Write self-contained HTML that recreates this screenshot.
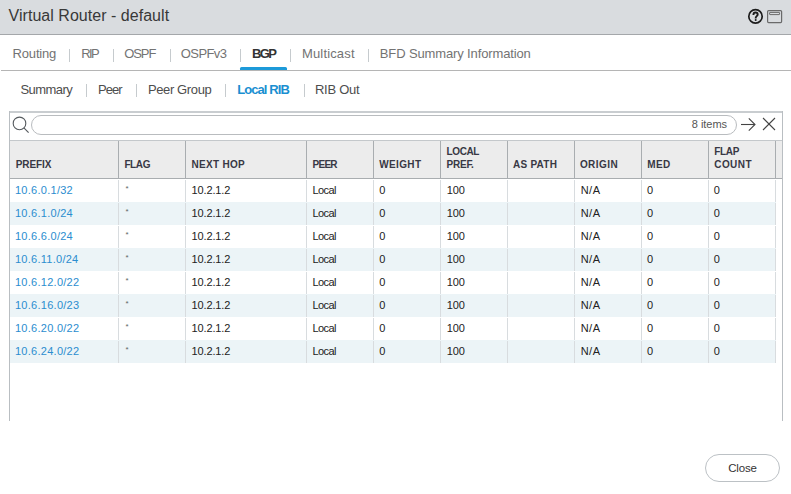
<!DOCTYPE html><html><head><meta charset="utf-8"><style>
html,body{margin:0;padding:0;width:791px;height:494px;overflow:hidden;background:#fff;}
body{position:relative;font-family:"Liberation Sans", sans-serif;}
.t{position:absolute;line-height:1;white-space:nowrap;}
.b{position:absolute;}
</style></head><body>
<div class="b" style="left:0;top:0;width:791px;height:34px;background:#d9dcdf;"></div>
<div class="b" style="left:0;top:34px;width:791px;height:1px;background:#a4a7aa;"></div>
<div class="t" style="left:8.60px;top:7.96px;font-size:16px;color:#383838;letter-spacing:0.03px;">Virtual Router - default</div>
<svg class="b" style="left:746px;top:7px" width="40" height="20" viewBox="0 0 40 20">
<circle cx="9.5" cy="9.4" r="6.7" fill="none" stroke="#1c1c1c" stroke-width="1.7"/>
<path d="M7.4,7.9 C7.4,6.3 8.3,5.5 9.6,5.5 C10.9,5.5 11.7,6.4 11.7,7.5 C11.7,9 9.7,9.2 9.7,10.9 L9.7,11.6" fill="none" stroke="#1c1c1c" stroke-width="1.9"/><circle cx="9.7" cy="13.1" r="1" fill="#1c1c1c"/>
<rect x="21.6" y="3.6" width="14" height="12" rx="1" fill="none" stroke="#6a6a6a" stroke-width="1.2"/>
<rect x="23.6" y="5.4" width="10" height="2.2" rx="0.4" fill="none" stroke="#6a6a6a" stroke-width="1"/>
</svg>
<div class="t" style="left:12.60px;top:46.70px;font-size:13px;color:#737373;letter-spacing:-0.18px;">Routing</div>
<div class="t" style="left:81.20px;top:46.70px;font-size:13px;color:#737373;letter-spacing:-1.63px;">RIP</div>
<div class="t" style="left:124.20px;top:46.70px;font-size:13px;color:#737373;letter-spacing:-1.07px;">OSPF</div>
<div class="t" style="left:180.80px;top:46.70px;font-size:13px;color:#737373;letter-spacing:-0.60px;">OSPFv3</div>
<div class="t" style="left:252.00px;top:46.70px;font-size:13px;color:#333;font-weight:bold;letter-spacing:-1.57px;">BGP</div>
<div class="t" style="left:302.00px;top:46.70px;font-size:13px;color:#737373;letter-spacing:0.15px;">Multicast</div>
<div class="t" style="left:379.80px;top:46.70px;font-size:13px;color:#737373;letter-spacing:-0.13px;">BFD Summary Information</div>
<div class="b" style="left:69px;top:49px;width:1px;height:13px;background:#c6cbce;"></div>
<div class="b" style="left:113px;top:49px;width:1px;height:13px;background:#c6cbce;"></div>
<div class="b" style="left:170px;top:49px;width:1px;height:13px;background:#c6cbce;"></div>
<div class="b" style="left:240px;top:49px;width:1px;height:13px;background:#c6cbce;"></div>
<div class="b" style="left:290px;top:49px;width:1px;height:13px;background:#c6cbce;"></div>
<div class="b" style="left:368px;top:49px;width:1px;height:13px;background:#c6cbce;"></div>
<div class="b" style="left:1px;top:70px;width:790px;height:1px;background:#b5b5b5;"></div>
<div class="b" style="left:240px;top:67px;width:47px;height:3px;background:#1d9ad9;border-radius:1.5px 1.5px 0 0;"></div>
<div class="t" style="left:20.50px;top:82.70px;font-size:13px;color:#4d4d4d;letter-spacing:-0.57px;">Summary</div>
<div class="t" style="left:98.00px;top:82.70px;font-size:13px;color:#4d4d4d;letter-spacing:-0.95px;">Peer</div>
<div class="t" style="left:147.90px;top:82.70px;font-size:13px;color:#4d4d4d;letter-spacing:-0.37px;">Peer Group</div>
<div class="t" style="left:237.20px;top:82.70px;font-size:13px;color:#1a8fd1;font-weight:bold;letter-spacing:-0.92px;">Local RIB</div>
<div class="t" style="left:315.00px;top:82.70px;font-size:13px;color:#4d4d4d;letter-spacing:-0.27px;">RIB Out</div>
<div class="b" style="left:86px;top:84px;width:1px;height:13px;background:#c6cbce;"></div>
<div class="b" style="left:136px;top:84px;width:1px;height:13px;background:#c6cbce;"></div>
<div class="b" style="left:225px;top:84px;width:1px;height:13px;background:#c6cbce;"></div>
<div class="b" style="left:304px;top:84px;width:1px;height:13px;background:#c6cbce;"></div>
<div class="b" style="left:9px;top:111px;width:774px;height:2px;background:#c9cdd0;"></div>
<div class="b" style="left:9px;top:111px;width:1px;height:310px;background:#b9bec2;"></div>
<div class="b" style="left:782px;top:111px;width:1px;height:310px;background:#b9bec2;"></div>
<svg class="b" style="left:10px;top:114px" width="28" height="24" viewBox="0 0 28 24">
<circle cx="9.5" cy="9.4" r="6.3" fill="none" stroke="#555a5e" stroke-width="1.1"/>
<line x1="13.9" y1="13.8" x2="18.6" y2="18.6" stroke="#555a5e" stroke-width="1.1"/>
</svg>
<div class="b" style="left:31px;top:115px;width:704px;height:18px;border:1px solid #b9bcbf;border-radius:10px;box-sizing:content-box;"></div>
<div class="t" style="left:691.80px;top:118.59px;font-size:11px;color:#555;letter-spacing:-0.04px;">8 items</div>
<svg class="b" style="left:738px;top:114px" width="42" height="22" viewBox="0 0 42 22">
<line x1="3" y1="10.5" x2="17" y2="10.5" stroke="#444" stroke-width="1.1"/>
<polyline points="10.8,4.3 17,10.5 10.8,16.7" fill="none" stroke="#444" stroke-width="1.1"/>
<line x1="25" y1="4" x2="37" y2="16" stroke="#444" stroke-width="1.1"/>
<line x1="37" y1="4" x2="25" y2="16" stroke="#444" stroke-width="1.1"/>
</svg>
<div class="b" style="left:10px;top:140px;width:772px;height:1px;background:#c4c8cb;"></div>
<div class="b" style="left:10px;top:141px;width:772px;height:37px;background:#ececec;"></div>
<div class="b" style="left:10px;top:178px;width:772px;height:1px;background:#a9adb0;"></div>
<div class="b" style="left:118px;top:141px;width:1px;height:37px;background:#a9adb0;"></div>
<div class="b" style="left:185px;top:141px;width:1px;height:37px;background:#a9adb0;"></div>
<div class="b" style="left:306px;top:141px;width:1px;height:37px;background:#a9adb0;"></div>
<div class="b" style="left:373px;top:141px;width:1px;height:37px;background:#a9adb0;"></div>
<div class="b" style="left:440px;top:141px;width:1px;height:37px;background:#a9adb0;"></div>
<div class="b" style="left:507px;top:141px;width:1px;height:37px;background:#a9adb0;"></div>
<div class="b" style="left:574px;top:141px;width:1px;height:37px;background:#a9adb0;"></div>
<div class="b" style="left:641px;top:141px;width:1px;height:37px;background:#a9adb0;"></div>
<div class="b" style="left:708px;top:141px;width:1px;height:37px;background:#a9adb0;"></div>
<div class="b" style="left:775px;top:141px;width:1px;height:37px;background:#a9adb0;"></div>
<div class="t" style="left:15.70px;top:159.53px;font-size:10px;color:#383844;font-weight:bold;letter-spacing:-0.10px;">PREFIX</div>
<div class="t" style="left:124.40px;top:159.53px;font-size:10px;color:#383844;font-weight:bold;letter-spacing:-0.40px;">FLAG</div>
<div class="t" style="left:191.60px;top:159.53px;font-size:10px;color:#383844;font-weight:bold;letter-spacing:0.29px;">NEXT HOP</div>
<div class="t" style="left:312.50px;top:159.53px;font-size:10px;color:#383844;font-weight:bold;letter-spacing:-0.72px;">PEER</div>
<div class="t" style="left:379.30px;top:159.53px;font-size:10px;color:#383844;font-weight:bold;letter-spacing:0.34px;">WEIGHT</div>
<div class="t" style="left:446.60px;top:146.53px;font-size:10px;color:#383844;font-weight:bold;letter-spacing:-0.41px;">LOCAL</div>
<div class="t" style="left:446.60px;top:159.53px;font-size:10px;color:#383844;font-weight:bold;letter-spacing:-0.26px;">PREF.</div>
<div class="t" style="left:513.10px;top:159.53px;font-size:10px;color:#383844;font-weight:bold;letter-spacing:0.23px;">AS PATH</div>
<div class="t" style="left:579.90px;top:159.53px;font-size:10px;color:#383844;font-weight:bold;letter-spacing:0.45px;">ORIGIN</div>
<div class="t" style="left:647.30px;top:159.53px;font-size:10px;color:#383844;font-weight:bold;letter-spacing:0.40px;">MED</div>
<div class="t" style="left:714.30px;top:146.53px;font-size:10px;color:#383844;font-weight:bold;letter-spacing:-0.37px;">FLAP</div>
<div class="t" style="left:714.30px;top:159.53px;font-size:10px;color:#383844;font-weight:bold;letter-spacing:0.41px;">COUNT</div>
<div class="b" style="left:10px;top:179px;width:766px;height:23px;background:#fff;"></div>
<div class="b" style="left:118px;top:180px;width:1px;height:22px;background:#d8dcdf;"></div>
<div class="b" style="left:185px;top:180px;width:1px;height:22px;background:#d8dcdf;"></div>
<div class="b" style="left:306px;top:180px;width:1px;height:22px;background:#d8dcdf;"></div>
<div class="b" style="left:373px;top:180px;width:1px;height:22px;background:#d8dcdf;"></div>
<div class="b" style="left:440px;top:180px;width:1px;height:22px;background:#d8dcdf;"></div>
<div class="b" style="left:507px;top:180px;width:1px;height:22px;background:#d8dcdf;"></div>
<div class="b" style="left:574px;top:180px;width:1px;height:22px;background:#d8dcdf;"></div>
<div class="b" style="left:641px;top:180px;width:1px;height:22px;background:#d8dcdf;"></div>
<div class="b" style="left:708px;top:180px;width:1px;height:22px;background:#d8dcdf;"></div>
<div class="b" style="left:775px;top:180px;width:1px;height:22px;background:#d8dcdf;"></div>
<div class="t" style="left:14.90px;top:184.89px;font-size:11px;color:#2b8dcf;letter-spacing:0.28px;">10.6.0.1/32</div>
<div class="t" style="left:125.50px;top:184.93px;font-size:8px;color:#666;">*</div>
<div class="t" style="left:191.60px;top:184.89px;font-size:11px;color:#222;letter-spacing:-0.15px;">10.2.1.2</div>
<div class="t" style="left:312.50px;top:184.89px;font-size:11px;color:#222;letter-spacing:-0.60px;">Local</div>
<div class="t" style="left:379.20px;top:184.89px;font-size:11px;color:#222;">0</div>
<div class="t" style="left:446.80px;top:184.89px;font-size:11px;color:#222;letter-spacing:-0.08px;">100</div>
<div class="t" style="left:580.70px;top:184.89px;font-size:11px;color:#222;letter-spacing:0.47px;">N/A</div>
<div class="t" style="left:646.90px;top:184.89px;font-size:11px;color:#222;">0</div>
<div class="t" style="left:713.80px;top:184.89px;font-size:11px;color:#222;">0</div>
<div class="b" style="left:10px;top:202px;width:766px;height:23px;background:#ecf4f7;"></div>
<div class="b" style="left:118px;top:203px;width:1px;height:22px;background:#d8dcdf;"></div>
<div class="b" style="left:185px;top:203px;width:1px;height:22px;background:#d8dcdf;"></div>
<div class="b" style="left:306px;top:203px;width:1px;height:22px;background:#d8dcdf;"></div>
<div class="b" style="left:373px;top:203px;width:1px;height:22px;background:#d8dcdf;"></div>
<div class="b" style="left:440px;top:203px;width:1px;height:22px;background:#d8dcdf;"></div>
<div class="b" style="left:507px;top:203px;width:1px;height:22px;background:#d8dcdf;"></div>
<div class="b" style="left:574px;top:203px;width:1px;height:22px;background:#d8dcdf;"></div>
<div class="b" style="left:641px;top:203px;width:1px;height:22px;background:#d8dcdf;"></div>
<div class="b" style="left:708px;top:203px;width:1px;height:22px;background:#d8dcdf;"></div>
<div class="b" style="left:775px;top:203px;width:1px;height:22px;background:#d8dcdf;"></div>
<div class="t" style="left:14.90px;top:207.89px;font-size:11px;color:#2b8dcf;letter-spacing:0.28px;">10.6.1.0/24</div>
<div class="t" style="left:125.50px;top:207.93px;font-size:8px;color:#666;">*</div>
<div class="t" style="left:191.60px;top:207.89px;font-size:11px;color:#222;letter-spacing:-0.15px;">10.2.1.2</div>
<div class="t" style="left:312.50px;top:207.89px;font-size:11px;color:#222;letter-spacing:-0.60px;">Local</div>
<div class="t" style="left:379.20px;top:207.89px;font-size:11px;color:#222;">0</div>
<div class="t" style="left:446.80px;top:207.89px;font-size:11px;color:#222;letter-spacing:-0.08px;">100</div>
<div class="t" style="left:580.70px;top:207.89px;font-size:11px;color:#222;letter-spacing:0.47px;">N/A</div>
<div class="t" style="left:646.90px;top:207.89px;font-size:11px;color:#222;">0</div>
<div class="t" style="left:713.80px;top:207.89px;font-size:11px;color:#222;">0</div>
<div class="b" style="left:10px;top:225px;width:766px;height:23px;background:#fff;"></div>
<div class="b" style="left:118px;top:226px;width:1px;height:22px;background:#d8dcdf;"></div>
<div class="b" style="left:185px;top:226px;width:1px;height:22px;background:#d8dcdf;"></div>
<div class="b" style="left:306px;top:226px;width:1px;height:22px;background:#d8dcdf;"></div>
<div class="b" style="left:373px;top:226px;width:1px;height:22px;background:#d8dcdf;"></div>
<div class="b" style="left:440px;top:226px;width:1px;height:22px;background:#d8dcdf;"></div>
<div class="b" style="left:507px;top:226px;width:1px;height:22px;background:#d8dcdf;"></div>
<div class="b" style="left:574px;top:226px;width:1px;height:22px;background:#d8dcdf;"></div>
<div class="b" style="left:641px;top:226px;width:1px;height:22px;background:#d8dcdf;"></div>
<div class="b" style="left:708px;top:226px;width:1px;height:22px;background:#d8dcdf;"></div>
<div class="b" style="left:775px;top:226px;width:1px;height:22px;background:#d8dcdf;"></div>
<div class="t" style="left:14.90px;top:230.89px;font-size:11px;color:#2b8dcf;letter-spacing:0.28px;">10.6.6.0/24</div>
<div class="t" style="left:125.50px;top:230.93px;font-size:8px;color:#666;">*</div>
<div class="t" style="left:191.60px;top:230.89px;font-size:11px;color:#222;letter-spacing:-0.15px;">10.2.1.2</div>
<div class="t" style="left:312.50px;top:230.89px;font-size:11px;color:#222;letter-spacing:-0.60px;">Local</div>
<div class="t" style="left:379.20px;top:230.89px;font-size:11px;color:#222;">0</div>
<div class="t" style="left:446.80px;top:230.89px;font-size:11px;color:#222;letter-spacing:-0.08px;">100</div>
<div class="t" style="left:580.70px;top:230.89px;font-size:11px;color:#222;letter-spacing:0.47px;">N/A</div>
<div class="t" style="left:646.90px;top:230.89px;font-size:11px;color:#222;">0</div>
<div class="t" style="left:713.80px;top:230.89px;font-size:11px;color:#222;">0</div>
<div class="b" style="left:10px;top:248px;width:766px;height:23px;background:#ecf4f7;"></div>
<div class="b" style="left:118px;top:249px;width:1px;height:22px;background:#d8dcdf;"></div>
<div class="b" style="left:185px;top:249px;width:1px;height:22px;background:#d8dcdf;"></div>
<div class="b" style="left:306px;top:249px;width:1px;height:22px;background:#d8dcdf;"></div>
<div class="b" style="left:373px;top:249px;width:1px;height:22px;background:#d8dcdf;"></div>
<div class="b" style="left:440px;top:249px;width:1px;height:22px;background:#d8dcdf;"></div>
<div class="b" style="left:507px;top:249px;width:1px;height:22px;background:#d8dcdf;"></div>
<div class="b" style="left:574px;top:249px;width:1px;height:22px;background:#d8dcdf;"></div>
<div class="b" style="left:641px;top:249px;width:1px;height:22px;background:#d8dcdf;"></div>
<div class="b" style="left:708px;top:249px;width:1px;height:22px;background:#d8dcdf;"></div>
<div class="b" style="left:775px;top:249px;width:1px;height:22px;background:#d8dcdf;"></div>
<div class="t" style="left:14.90px;top:253.89px;font-size:11px;color:#2b8dcf;letter-spacing:0.27px;">10.6.11.0/24</div>
<div class="t" style="left:125.50px;top:253.93px;font-size:8px;color:#666;">*</div>
<div class="t" style="left:191.60px;top:253.89px;font-size:11px;color:#222;letter-spacing:-0.15px;">10.2.1.2</div>
<div class="t" style="left:312.50px;top:253.89px;font-size:11px;color:#222;letter-spacing:-0.60px;">Local</div>
<div class="t" style="left:379.20px;top:253.89px;font-size:11px;color:#222;">0</div>
<div class="t" style="left:446.80px;top:253.89px;font-size:11px;color:#222;letter-spacing:-0.08px;">100</div>
<div class="t" style="left:580.70px;top:253.89px;font-size:11px;color:#222;letter-spacing:0.47px;">N/A</div>
<div class="t" style="left:646.90px;top:253.89px;font-size:11px;color:#222;">0</div>
<div class="t" style="left:713.80px;top:253.89px;font-size:11px;color:#222;">0</div>
<div class="b" style="left:10px;top:271px;width:766px;height:23px;background:#fff;"></div>
<div class="b" style="left:118px;top:272px;width:1px;height:22px;background:#d8dcdf;"></div>
<div class="b" style="left:185px;top:272px;width:1px;height:22px;background:#d8dcdf;"></div>
<div class="b" style="left:306px;top:272px;width:1px;height:22px;background:#d8dcdf;"></div>
<div class="b" style="left:373px;top:272px;width:1px;height:22px;background:#d8dcdf;"></div>
<div class="b" style="left:440px;top:272px;width:1px;height:22px;background:#d8dcdf;"></div>
<div class="b" style="left:507px;top:272px;width:1px;height:22px;background:#d8dcdf;"></div>
<div class="b" style="left:574px;top:272px;width:1px;height:22px;background:#d8dcdf;"></div>
<div class="b" style="left:641px;top:272px;width:1px;height:22px;background:#d8dcdf;"></div>
<div class="b" style="left:708px;top:272px;width:1px;height:22px;background:#d8dcdf;"></div>
<div class="b" style="left:775px;top:272px;width:1px;height:22px;background:#d8dcdf;"></div>
<div class="t" style="left:14.90px;top:276.89px;font-size:11px;color:#2b8dcf;letter-spacing:0.28px;">10.6.12.0/22</div>
<div class="t" style="left:125.50px;top:276.93px;font-size:8px;color:#666;">*</div>
<div class="t" style="left:191.60px;top:276.89px;font-size:11px;color:#222;letter-spacing:-0.15px;">10.2.1.2</div>
<div class="t" style="left:312.50px;top:276.89px;font-size:11px;color:#222;letter-spacing:-0.60px;">Local</div>
<div class="t" style="left:379.20px;top:276.89px;font-size:11px;color:#222;">0</div>
<div class="t" style="left:446.80px;top:276.89px;font-size:11px;color:#222;letter-spacing:-0.08px;">100</div>
<div class="t" style="left:580.70px;top:276.89px;font-size:11px;color:#222;letter-spacing:0.47px;">N/A</div>
<div class="t" style="left:646.90px;top:276.89px;font-size:11px;color:#222;">0</div>
<div class="t" style="left:713.80px;top:276.89px;font-size:11px;color:#222;">0</div>
<div class="b" style="left:10px;top:294px;width:766px;height:23px;background:#ecf4f7;"></div>
<div class="b" style="left:118px;top:295px;width:1px;height:22px;background:#d8dcdf;"></div>
<div class="b" style="left:185px;top:295px;width:1px;height:22px;background:#d8dcdf;"></div>
<div class="b" style="left:306px;top:295px;width:1px;height:22px;background:#d8dcdf;"></div>
<div class="b" style="left:373px;top:295px;width:1px;height:22px;background:#d8dcdf;"></div>
<div class="b" style="left:440px;top:295px;width:1px;height:22px;background:#d8dcdf;"></div>
<div class="b" style="left:507px;top:295px;width:1px;height:22px;background:#d8dcdf;"></div>
<div class="b" style="left:574px;top:295px;width:1px;height:22px;background:#d8dcdf;"></div>
<div class="b" style="left:641px;top:295px;width:1px;height:22px;background:#d8dcdf;"></div>
<div class="b" style="left:708px;top:295px;width:1px;height:22px;background:#d8dcdf;"></div>
<div class="b" style="left:775px;top:295px;width:1px;height:22px;background:#d8dcdf;"></div>
<div class="t" style="left:14.90px;top:299.89px;font-size:11px;color:#2b8dcf;letter-spacing:0.28px;">10.6.16.0/23</div>
<div class="t" style="left:125.50px;top:299.93px;font-size:8px;color:#666;">*</div>
<div class="t" style="left:191.60px;top:299.89px;font-size:11px;color:#222;letter-spacing:-0.15px;">10.2.1.2</div>
<div class="t" style="left:312.50px;top:299.89px;font-size:11px;color:#222;letter-spacing:-0.60px;">Local</div>
<div class="t" style="left:379.20px;top:299.89px;font-size:11px;color:#222;">0</div>
<div class="t" style="left:446.80px;top:299.89px;font-size:11px;color:#222;letter-spacing:-0.08px;">100</div>
<div class="t" style="left:580.70px;top:299.89px;font-size:11px;color:#222;letter-spacing:0.47px;">N/A</div>
<div class="t" style="left:646.90px;top:299.89px;font-size:11px;color:#222;">0</div>
<div class="t" style="left:713.80px;top:299.89px;font-size:11px;color:#222;">0</div>
<div class="b" style="left:10px;top:317px;width:766px;height:23px;background:#fff;"></div>
<div class="b" style="left:118px;top:318px;width:1px;height:22px;background:#d8dcdf;"></div>
<div class="b" style="left:185px;top:318px;width:1px;height:22px;background:#d8dcdf;"></div>
<div class="b" style="left:306px;top:318px;width:1px;height:22px;background:#d8dcdf;"></div>
<div class="b" style="left:373px;top:318px;width:1px;height:22px;background:#d8dcdf;"></div>
<div class="b" style="left:440px;top:318px;width:1px;height:22px;background:#d8dcdf;"></div>
<div class="b" style="left:507px;top:318px;width:1px;height:22px;background:#d8dcdf;"></div>
<div class="b" style="left:574px;top:318px;width:1px;height:22px;background:#d8dcdf;"></div>
<div class="b" style="left:641px;top:318px;width:1px;height:22px;background:#d8dcdf;"></div>
<div class="b" style="left:708px;top:318px;width:1px;height:22px;background:#d8dcdf;"></div>
<div class="b" style="left:775px;top:318px;width:1px;height:22px;background:#d8dcdf;"></div>
<div class="t" style="left:14.90px;top:322.89px;font-size:11px;color:#2b8dcf;letter-spacing:0.28px;">10.6.20.0/22</div>
<div class="t" style="left:125.50px;top:322.93px;font-size:8px;color:#666;">*</div>
<div class="t" style="left:191.60px;top:322.89px;font-size:11px;color:#222;letter-spacing:-0.15px;">10.2.1.2</div>
<div class="t" style="left:312.50px;top:322.89px;font-size:11px;color:#222;letter-spacing:-0.60px;">Local</div>
<div class="t" style="left:379.20px;top:322.89px;font-size:11px;color:#222;">0</div>
<div class="t" style="left:446.80px;top:322.89px;font-size:11px;color:#222;letter-spacing:-0.08px;">100</div>
<div class="t" style="left:580.70px;top:322.89px;font-size:11px;color:#222;letter-spacing:0.47px;">N/A</div>
<div class="t" style="left:646.90px;top:322.89px;font-size:11px;color:#222;">0</div>
<div class="t" style="left:713.80px;top:322.89px;font-size:11px;color:#222;">0</div>
<div class="b" style="left:10px;top:340px;width:766px;height:23px;background:#ecf4f7;"></div>
<div class="b" style="left:118px;top:341px;width:1px;height:22px;background:#d8dcdf;"></div>
<div class="b" style="left:185px;top:341px;width:1px;height:22px;background:#d8dcdf;"></div>
<div class="b" style="left:306px;top:341px;width:1px;height:22px;background:#d8dcdf;"></div>
<div class="b" style="left:373px;top:341px;width:1px;height:22px;background:#d8dcdf;"></div>
<div class="b" style="left:440px;top:341px;width:1px;height:22px;background:#d8dcdf;"></div>
<div class="b" style="left:507px;top:341px;width:1px;height:22px;background:#d8dcdf;"></div>
<div class="b" style="left:574px;top:341px;width:1px;height:22px;background:#d8dcdf;"></div>
<div class="b" style="left:641px;top:341px;width:1px;height:22px;background:#d8dcdf;"></div>
<div class="b" style="left:708px;top:341px;width:1px;height:22px;background:#d8dcdf;"></div>
<div class="b" style="left:775px;top:341px;width:1px;height:22px;background:#d8dcdf;"></div>
<div class="t" style="left:14.90px;top:345.89px;font-size:11px;color:#2b8dcf;letter-spacing:0.28px;">10.6.24.0/22</div>
<div class="t" style="left:125.50px;top:345.93px;font-size:8px;color:#666;">*</div>
<div class="t" style="left:191.60px;top:345.89px;font-size:11px;color:#222;letter-spacing:-0.15px;">10.2.1.2</div>
<div class="t" style="left:312.50px;top:345.89px;font-size:11px;color:#222;letter-spacing:-0.60px;">Local</div>
<div class="t" style="left:379.20px;top:345.89px;font-size:11px;color:#222;">0</div>
<div class="t" style="left:446.80px;top:345.89px;font-size:11px;color:#222;letter-spacing:-0.08px;">100</div>
<div class="t" style="left:580.70px;top:345.89px;font-size:11px;color:#222;letter-spacing:0.47px;">N/A</div>
<div class="t" style="left:646.90px;top:345.89px;font-size:11px;color:#222;">0</div>
<div class="t" style="left:713.80px;top:345.89px;font-size:11px;color:#222;">0</div>
<div class="b" style="left:705px;top:454px;width:73px;height:26px;border:1px solid #bcc1c5;border-radius:14px;box-sizing:content-box;"></div>
<div class="t" style="left:728.20px;top:462.57px;font-size:11.5px;color:#333;letter-spacing:-0.15px;">Close</div>
</body></html>
